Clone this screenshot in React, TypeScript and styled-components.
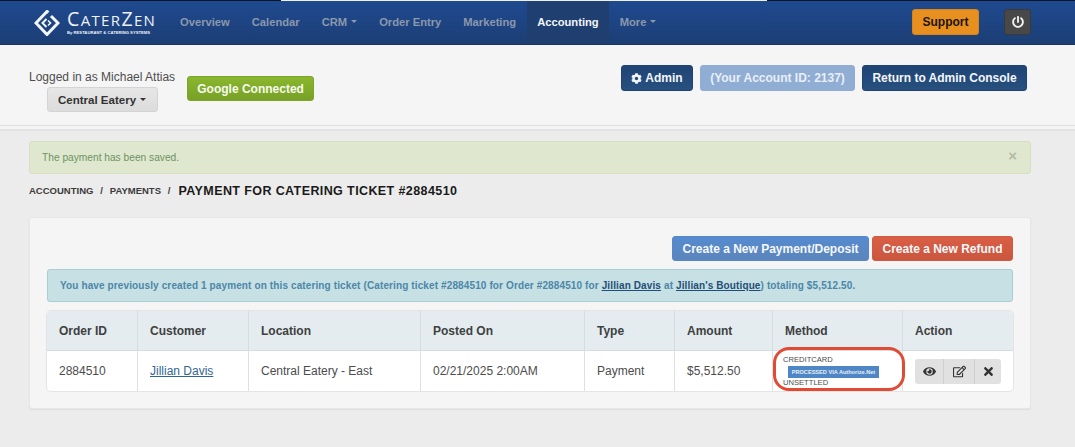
import React from 'react';
import styled, { createGlobalStyle, css } from 'styled-components';
import { FaCog, FaEye, FaPowerOff, FaRegEdit, FaTimes } from 'react-icons/fa';

const GlobalStyle = createGlobalStyle`
  html, body {
    margin: 0;
    padding: 0;
    background: #ececec;
    font-family: "Liberation Sans", Arial, sans-serif;
    color: #444;
  }
  * { box-sizing: border-box; }
`;

const TopEdge = styled.div`
  height: 1px;
  background: linear-gradient(to right, #0c1428 281px, #eef0f5 281px, #eef0f5 767px, #0c1428 767px);
`;

const NavBar = styled.nav`
  display: flex;
  align-items: stretch;
  height: 44px;
  padding: 0 44px 0 34px;
  background: linear-gradient(to bottom, #1f4a90, #1c3e74);
  border-bottom: 1px solid #1a3560;
`;

const Logo = styled.div`
  display: flex;
  align-items: center;
  gap: 7px;
  width: 135px;
`;

const LogoWords = styled.div`
  display: flex;
  flex-direction: column;
  color: #eef2f8;
`;

const LogoName = styled.span`
  font-family: "Open Sans", sans-serif;
  font-size: 15px;
  line-height: 17px;
  letter-spacing: 1.35px;
  white-space: nowrap;
`;

const LogoCap = styled.span`
  font-size: 19.5px;
`;

const LogoTag = styled.span`
  margin-top: 1px;
  font-size: 4.2px;
  line-height: 5px;
  font-weight: 700;
  white-space: nowrap;
`;

const NavItem = styled.a<{ $active?: boolean }>`
  display: flex;
  align-items: center;
  padding: 0 11px 2px;
  font-size: 11.2px;
  font-weight: 700;
  white-space: nowrap;
  color: ${({ $active }) => ($active ? '#f2f5fa' : '#8b98ad')};
  ${({ $active }) =>
    $active &&
    css`
      background: #1e3f70;
      padding: 0 10px 2px;
    `}
`;

const NavCaret = styled.span`
  display: inline-block;
  margin-left: 4px;
  border-top: 3px solid currentColor;
  border-left: 3px solid transparent;
  border-right: 3px solid transparent;
`;

const NavRight = styled.div`
  display: flex;
  align-items: center;
  gap: 25px;
  margin-left: auto;
  padding-bottom: 1px;
`;

const SupportButton = styled.button`
  width: 67px;
  height: 26px;
  padding: 0;
  border: 1px solid #d98519;
  border-radius: 3px;
  background: #e8901f;
  color: #1c1408;
  font: 700 12px "Liberation Sans", Arial, sans-serif;
`;

const PowerButton = styled.button`
  display: flex;
  align-items: center;
  justify-content: center;
  width: 27px;
  height: 26px;
  padding: 0;
  border: 1px solid #3a3a3a;
  border-radius: 3px;
  background: #484848;
  color: #f2f2f2;
  font-size: 12px;
`;

const SubHeader = styled.header`
  display: flex;
  align-items: flex-start;
  height: 80px;
  padding: 20px 48px 0 29px;
  background: #f5f5f5;
`;

const UserBlock = styled.div`
  display: flex;
  flex-direction: column;
  align-items: center;
  padding-top: 5px;
`;

const LoggedIn = styled.span`
  font-size: 12px;
  line-height: 15px;
  color: #4d4d4d;
`;

const baseButton = css`
  display: inline-flex;
  align-items: center;
  justify-content: center;
  padding: 0;
  border-radius: 3px;
  font: 700 12px "Liberation Sans", Arial, sans-serif;
  white-space: nowrap;
`;

const LocationButton = styled.button`
  ${baseButton}
  width: 111px;
  height: 25px;
  margin-top: 2px;
  border: 1px solid #d4d4d4;
  background: linear-gradient(to bottom, #e6e6e6, #dcdcdc);
  color: #333;
  font-size: 11.5px;
`;

const GoogleButton = styled.button`
  ${baseButton}
  width: 127px;
  height: 25px;
  margin: 11px 0 0 12px;
  border: 1px solid #7ca428;
  background: linear-gradient(to bottom, #8ab62f, #78a126);
  color: #f6f9ee;
`;

const HeaderActions = styled.div`
  display: flex;
  gap: 7px;
  margin-left: auto;
`;

const HeaderButton = styled.button<{ $muted?: boolean; $width: number }>`
  ${baseButton}
  width: ${({ $width }) => $width}px;
  height: 26px;
  gap: 3px;
  border: 1px solid ${({ $muted }) => ($muted ? '#90add3' : '#1e4374')};
  background: ${({ $muted }) =>
    $muted ? '#90add3' : 'linear-gradient(to bottom, #1f4475, #27507f)'};
  color: ${({ $muted }) => ($muted ? '#e9eff7' : '#f3f6fa')};
`;

const Rules = styled.div`
  height: 6px;
  border-top: 1px solid #e0e0e0;
  border-bottom: 2px solid #e3e3e3;
  background: #f4f4f4;
`;

const Content = styled.main`
  padding: 10px 44px 39px 29px;
`;

const SavedAlert = styled.div`
  display: flex;
  justify-content: space-between;
  height: 33px;
  padding: 0 13px 0 12px;
  border: 1px solid #d6e0c0;
  border-radius: 3px;
  background: #dfe7cf;
  color: #6b9461;
  font-size: 10.2px;
  line-height: 31px;
`;

const CloseMark = styled.span`
  color: #b2bba6;
  font-size: 15px;
  font-weight: 700;
  line-height: 27px;
`;

const Crumbs = styled.div`
  display: flex;
  align-items: center;
  height: 43px;
  padding-bottom: 10px;
  color: #3b3b3b;
  font-size: 9.5px;
  font-weight: 700;
  text-transform: uppercase;
  word-spacing: 0.8px;
  white-space: pre;
`;

const CrumbTitle = styled.h1`
  margin: 0 0 0 8px;
  color: #1a1a1a;
  font-size: 12.5px;
  font-weight: 700;
  letter-spacing: 0.4px;
  word-spacing: 0;
`;

const Panel = styled.section`
  padding: 18px 17px 17px;
  border: 1px solid #e6e6e6;
  border-radius: 3px;
  background: #f5f5f5;
  box-shadow: 0 1px 1px #dedede;
`;

const PanelActions = styled.div`
  display: flex;
  justify-content: flex-end;
  gap: 3px;
`;

const CreateButton = styled.button<{ $tone: 'blue' | 'red'; $width: number }>`
  ${baseButton}
  width: ${({ $width }) => $width}px;
  height: 25px;
  color: #f5f7fa;
  border: 1px solid ${({ $tone }) => ($tone === 'blue' ? '#5687c6' : '#d25a43')};
  background: ${({ $tone }) =>
    $tone === 'blue'
      ? 'linear-gradient(to bottom, #558bd0, #5c85bb)'
      : 'linear-gradient(to bottom, #d95f46, #cb553d)'};
`;

const InfoAlert = styled.div`
  height: 33px;
  margin-top: 8px;
  padding: 0 12px;
  border: 1px solid #a9cdd4;
  border-radius: 3px;
  background: #c6e0e4;
  color: #4c87a8;
  font-size: 10px;
  font-weight: 700;
  letter-spacing: 0.12px;
  line-height: 31px;
  white-space: nowrap;
`;

const InfoLink = styled.a`
  color: #1f4f78;
  text-decoration: underline;
`;

const Table = styled.table`
  width: 966px;
  margin-top: 9px;
  border-collapse: separate;
  border-spacing: 0;
  table-layout: fixed;
  border-radius: 4px;
  background: #fff;
  box-shadow: 0 0 0 1px #e4e4e4;
  font-size: 12px;
`;

const HeadCell = styled.th<{ $width: number }>`
  width: ${({ $width }) => $width}px;
  height: 40px;
  padding: 0 12px;
  border-right: 1px solid #d5dde0;
  border-bottom: 1px solid #d5dde0;
  background: #e4ecef;
  color: #404040;
  font-weight: 700;
  text-align: left;
  &:first-child { border-top-left-radius: 4px; }
  &:last-child { border-right: 0; border-top-right-radius: 4px; }
`;

const Cell = styled.td`
  position: relative;
  height: 40px;
  padding: 0 11px 0 12px;
  border-right: 1px solid #e0e0e0;
  color: #4c4c4c;
  white-space: nowrap;
  &:last-child { border-right: 0; }
`;

const MethodCell = styled(Cell)`
  padding: 0 0 0 10px;
`;

const CustomerLink = styled.a`
  color: #2f6693;
  text-decoration: underline;
`;

const MethodText = styled.div`
  color: #4c4c4c;
  font-size: 7.6px;
  line-height: 10px;
`;

const ProcessedBadge = styled.div`
  width: 91px;
  height: 12px;
  margin: 1px 0 0 5px;
  background: #4f86c6;
  color: #e8f0f9;
  font-size: 5.6px;
  font-weight: 700;
  line-height: 12px;
  text-align: center;
`;

const Annotation = styled.div`
  position: absolute;
  left: 0;
  top: -4px;
  width: 132px;
  height: 44px;
  border: 3.5px solid #e14b35;
  border-radius: 16px;
`;

const ActionGroup = styled.div`
  display: inline-flex;
  height: 25px;
  border-radius: 3px;
  overflow: hidden;
`;

const ActionButton = styled.button<{ $width: number }>`
  display: flex;
  align-items: center;
  justify-content: center;
  width: ${({ $width }) => $width}px;
  padding: 0;
  border: 0;
  border-right: 1px solid #d0d0d0;
  background: #e1e1e1;
  color: #333;
  font-size: 13px;
  &:last-child { border-right: 0; }
`;

const columns: Array<[string, number]> = [
  ['Order ID', 91],
  ['Customer', 111],
  ['Location', 172],
  ['Posted On', 164],
  ['Type', 90],
  ['Amount', 98],
  ['Method', 130],
  ['Action', 110],
];

const navItems = ['Overview', 'Calendar'];

export default function App() {
  return (
    <>
      <GlobalStyle />
      <TopEdge />
      <NavBar>
        <Logo>
          <svg width="26" height="26" viewBox="0 0 26 26" fill="none" stroke="#f2f5fa">
            <path d="M14.5 2.5 L13 1.5 L2 13 L13 24.5 L24 13 L17 6" strokeWidth="3" />
            <path d="M12.5 9 L8.5 13 L12.5 17" strokeWidth="2" />
            <path d="M14 10.5 L16.5 13 L14 15.5" strokeWidth="1.6" />
          </svg>
          <LogoWords>
            <LogoName>
              <LogoCap>C</LogoCap>ATER<LogoCap>Z</LogoCap>EN
            </LogoName>
            <LogoTag>By RESTAURANT &amp; CATERING SYSTEMS</LogoTag>
          </LogoWords>
        </Logo>
        {navItems.map((item) => (
          <NavItem key={item}>{item}</NavItem>
        ))}
        <NavItem>
          CRM
          <NavCaret />
        </NavItem>
        <NavItem>Order Entry</NavItem>
        <NavItem>Marketing</NavItem>
        <NavItem $active>Accounting</NavItem>
        <NavItem>
          More
          <NavCaret />
        </NavItem>
        <NavRight>
          <SupportButton>Support</SupportButton>
          <PowerButton>
            <FaPowerOff />
          </PowerButton>
        </NavRight>
      </NavBar>

      <SubHeader>
        <UserBlock>
          <LoggedIn>Logged in as Michael Attias</LoggedIn>
          <LocationButton>
            Central Eatery
            <NavCaret />
          </LocationButton>
        </UserBlock>
        <GoogleButton>Google Connected</GoogleButton>
        <HeaderActions>
          <HeaderButton $width={72}>
            <FaCog size={11} /> Admin
          </HeaderButton>
          <HeaderButton $width={155} $muted>
            (Your Account ID: 2137)
          </HeaderButton>
          <HeaderButton $width={165}>Return to Admin Console</HeaderButton>
        </HeaderActions>
      </SubHeader>
      <Rules />

      <Content>
        <SavedAlert>
          The payment has been saved.
          <CloseMark>×</CloseMark>
        </SavedAlert>
        <Crumbs>
          {'Accounting  /  Payments  /'}
          <CrumbTitle>Payment for Catering Ticket #2884510</CrumbTitle>
        </Crumbs>
        <Panel>
          <PanelActions>
            <CreateButton $tone="blue" $width={197}>
              Create a New Payment/Deposit
            </CreateButton>
            <CreateButton $tone="red" $width={141}>
              Create a New Refund
            </CreateButton>
          </PanelActions>
          <InfoAlert>
            You have previously created 1 payment on this catering ticket (Catering ticket #2884510
            for Order #2884510 for <InfoLink>Jillian Davis</InfoLink> at{' '}
            <InfoLink>Jillian's Boutique</InfoLink>) totaling $5,512.50.
          </InfoAlert>
          <Table>
            <thead>
              <tr>
                {columns.map(([label, width]) => (
                  <HeadCell key={label} $width={width}>
                    {label}
                  </HeadCell>
                ))}
              </tr>
            </thead>
            <tbody>
              <tr>
                <Cell>2884510</Cell>
                <Cell>
                  <CustomerLink>Jillian Davis</CustomerLink>
                </Cell>
                <Cell>Central Eatery - East</Cell>
                <Cell>02/21/2025 2:00AM</Cell>
                <Cell>Payment</Cell>
                <Cell>$5,512.50</Cell>
                <MethodCell>
                  <MethodText>CREDITCARD</MethodText>
                  <ProcessedBadge>PROCESSED VIA Authorize.Net</ProcessedBadge>
                  <MethodText>UNSETTLED</MethodText>
                  <Annotation />
                </MethodCell>
                <Cell>
                  <ActionGroup>
                    <ActionButton $width={29}>
                      <FaEye />
                    </ActionButton>
                    <ActionButton $width={31}>
                      <FaRegEdit />
                    </ActionButton>
                    <ActionButton $width={26}>
                      <FaTimes />
                    </ActionButton>
                  </ActionGroup>
                </Cell>
              </tr>
            </tbody>
          </Table>
        </Panel>
      </Content>
    </>
  );
}
